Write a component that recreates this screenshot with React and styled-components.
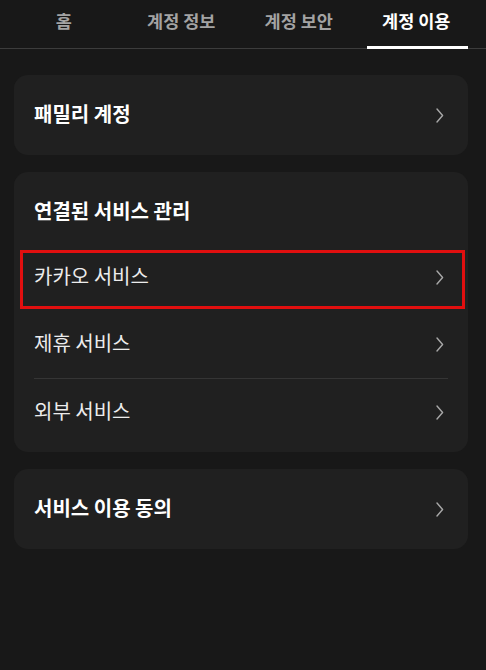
import React from "react";
import styled, { createGlobalStyle } from "styled-components";

const GlobalStyle = createGlobalStyle`
  html, body {
    margin: 0;
    padding: 0;
    background: #181818;
  }
  body {
    font-family: "Noto Sans CJK KR", "Noto Sans", sans-serif;
    color: #f2f2f2;
  }
`;

const Page = styled.div`
  width: 486px;
  min-height: 670px;
  background: #181818;
`;

const TabBar = styled.nav`
  display: grid;
  grid-template-columns: repeat(4, 1fr);
  padding: 0 11px 0 5px;
  height: 49px;
  border-bottom: 1px solid #3c3c3c;
  box-sizing: border-box;
`;

const Tab = styled.div`
  position: relative;
  display: flex;
  align-items: center;
  justify-content: center;
  padding-bottom: 8px;
  font-size: 17.5px;
  font-weight: 700;
  color: ${p => (p.$active ? "#ffffff" : "#a3a3a3")};

  &::after {
    content: "";
    display: ${p => (p.$active ? "block" : "none")};
    position: absolute;
    left: 9px;
    right: 7px;
    bottom: -1px;
    height: 3px;
    background: #ffffff;
  }
`;

const Content = styled.div`
  display: flex;
  flex-direction: column;
  gap: 17px;
  padding: 26px 18px 0 14px;
`;

const Card = styled.section`
  background: #202020;
  border-radius: 14px;
  padding: ${p => p.$padding || "0"};
`;

const CardHeader = styled.h2`
  margin: 0;
  padding: 24px 20px 18px;
  font-size: 20px;
  line-height: 30px;
  font-weight: 700;
  color: #ffffff;
`;

const Row = styled.div`
  position: relative;
  display: flex;
  align-items: center;
  justify-content: space-between;
  box-sizing: border-box;
  height: ${p => p.$height || "67px"};
  padding: 0 24px 4px 20px;
  font-size: 20px;
  font-weight: ${p => (p.$bold ? 700 : 400)};
  color: ${p => (p.$bold ? "#ffffff" : "#ececec")};

  svg {
    margin-top: 4px;
  }
`;

const Highlight = styled.div`
  position: absolute;
  left: 6px;
  right: 3px;
  top: 6px;
  bottom: 2px;
  border: 3px solid #e10f0f;
  pointer-events: none;
`;

const Divider = styled.hr`
  margin: 0 20px;
  border: none;
  height: 1px;
  background: #353535;
`;

const Chevron = () => (
  <svg width="8" height="15" viewBox="0 0 8 15" fill="none">
    <path
      d="M1 1 L6.6 7.5 L1 14"
      stroke="#a8a8a8"
      strokeWidth="1.4"
      strokeLinecap="round"
      strokeLinejoin="round"
    />
  </svg>
);

const tabs = ["홈", "계정 정보", "계정 보안", "계정 이용"];

export default function App() {
  return (
    <Page>
      <GlobalStyle />
      <TabBar>
        {tabs.map((t, i) => (
          <Tab key={t} $active={i === 3}>
            {t}
          </Tab>
        ))}
      </TabBar>

      <Content>
        <Card>
          <Row $height="80px" $bold>
            <span>패밀리 계정</span>
            <Chevron />
          </Row>
        </Card>

        <Card $padding="0 0 7px">
          <CardHeader>연결된 서비스 관리</CardHeader>
          <Row>
            <span>카카오 서비스</span>
            <Chevron />
            <Highlight />
          </Row>
          <Row>
            <span>제휴 서비스</span>
            <Chevron />
          </Row>
          <Divider />
          <Row $height="66px">
            <span>외부 서비스</span>
            <Chevron />
          </Row>
        </Card>

        <Card>
          <Row $height="80px" $bold>
            <span>서비스 이용 동의</span>
            <Chevron />
          </Row>
        </Card>
      </Content>
    </Page>
  );
}
